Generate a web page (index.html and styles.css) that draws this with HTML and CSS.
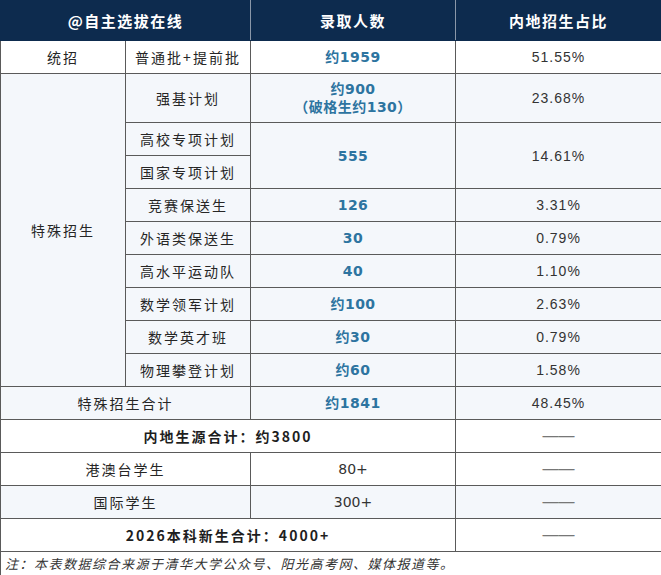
FILE: index.html
```html
<!DOCTYPE html>
<html lang="zh">
<head>
<meta charset="utf-8">
<link rel="stylesheet" href="styles.css">
</head>
<body>
<table class="tbl">
  <colgroup>
    <col class="c1"><col class="c2"><col class="c3"><col class="c4">
  </colgroup>
  <thead>
    <tr class="head">
      <th colspan="2">@自主选拔在线</th>
      <th>录取人数</th>
      <th>内地招生占比</th>
    </tr>
  </thead>
  <tbody>
    <tr class="r white">
      <td class="cn">统招</td>
      <td class="cn">普通批+提前批</td>
      <td class="num">约1959</td>
      <td class="pct">51.55%</td>
    </tr>
    <tr class="r tall">
      <td class="cn" rowspan="9">特殊招生</td>
      <td class="cn">强基计划</td>
      <td class="num">约900<br>（破格生约130）</td>
      <td class="pct">23.68%</td>
    </tr>
    <tr class="r">
      <td class="cn">高校专项计划</td>
      <td class="num" rowspan="2">555</td>
      <td class="pct" rowspan="2">14.61%</td>
    </tr>
    <tr class="r"><td class="cn">国家专项计划</td></tr>
    <tr class="r"><td class="cn">竞赛保送生</td><td class="num">126</td><td class="pct">3.31%</td></tr>
    <tr class="r"><td class="cn">外语类保送生</td><td class="num">30</td><td class="pct">0.79%</td></tr>
    <tr class="r"><td class="cn">高水平运动队</td><td class="num">40</td><td class="pct">1.10%</td></tr>
    <tr class="r"><td class="cn">数学领军计划</td><td class="num">约100</td><td class="pct">2.63%</td></tr>
    <tr class="r"><td class="cn">数学英才班</td><td class="num">约30</td><td class="pct">0.79%</td></tr>
    <tr class="r"><td class="cn">物理攀登计划</td><td class="num">约60</td><td class="pct">1.58%</td></tr>
    <tr class="r"><td class="cn" colspan="2">特殊招生合计</td><td class="num">约1841</td><td class="pct">48.45%</td></tr>
    <tr class="r white"><td class="total" colspan="3">内地生源合计：约3800</td><td class="dash">——</td></tr>
    <tr class="r white"><td class="cn" colspan="2">港澳台学生</td><td class="plain">80+</td><td class="dash">——</td></tr>
    <tr class="r"><td class="cn" colspan="2">国际学生</td><td class="plain">300+</td><td class="dash">——</td></tr>
    <tr class="r white"><td class="total" colspan="3">2026本科新生合计：4000+</td><td class="dash">——</td></tr>
    <tr class="note-row"><td class="note" colspan="4">注：本表数据综合来源于清华大学公众号、阳光高考网、媒体报道等。</td></tr>
  </tbody>
</table>
</body>
</html>
```
FILE: styles.css
```css
html, body {
  margin: 0;
  padding: 0;
  background: #ffffff;
}
body {
  font-family: "Noto Sans CJK SC", "Liberation Sans", sans-serif;
  color: #222;
}
.tbl {
  border-collapse: collapse;
  table-layout: fixed;
  width: 661px;
}
.c1 { width: 125px; }
.c2 { width: 125px; }
.c3 { width: 205px; }
.c4 { width: 206px; }

.head th {
  background: #0d2b4e;
  color: #ffffff;
  font-weight: 700;
  font-size: 15px;
  letter-spacing: 1.5px;
  height: 39px;
  padding: 0;
  border: 1px solid #0d2b4e;
  border-right-color: #8a97a8;
  text-align: center;
}
.head th:last-child { border-right-color: #0d2b4e; }

.tbl td {
  border: 1px solid #5a5a5a;
  padding: 0;
  text-align: center;
  vertical-align: middle;
  height: 32px;
  background: #f4f7fb;
  font-size: 14px;
  line-height: 18px;
}
.r.white td { background: #ffffff; }
.r.tall td { height: 48px; }

.cn {
  letter-spacing: 2px;
  color: #262626;
}
.num {
  color: #2d74a0;
  font-weight: 700;
  font-family: "DejaVu Sans", "Noto Sans CJK SC", sans-serif;
  font-size: 14px;
  letter-spacing: 0.5px;
  line-height: 19px;
}
.pct {
  font-family: "Liberation Sans", sans-serif;
  font-size: 14px;
  letter-spacing: 1px;
  color: #333;
}
.plain {
  font-family: "DejaVu Sans", sans-serif;
  font-size: 13px;
  color: #333;
}
.total {
  font-weight: 700;
  letter-spacing: 2px;
  color: #1e1e1e;
  font-size: 14px;
}
.tbl .dash {
  color: #777;
  font-family: "Liberation Sans", sans-serif;
  font-size: 16px;
  line-height: 18px;
  letter-spacing: 0;
}
.note-row td {
  height: 24px;
  background: #ffffff;
}
.tbl .note {
  text-align: left;
  font-style: italic;
  font-size: 13px;
  letter-spacing: 1.5px;
  padding-left: 4px;
  color: #333;
}
```
